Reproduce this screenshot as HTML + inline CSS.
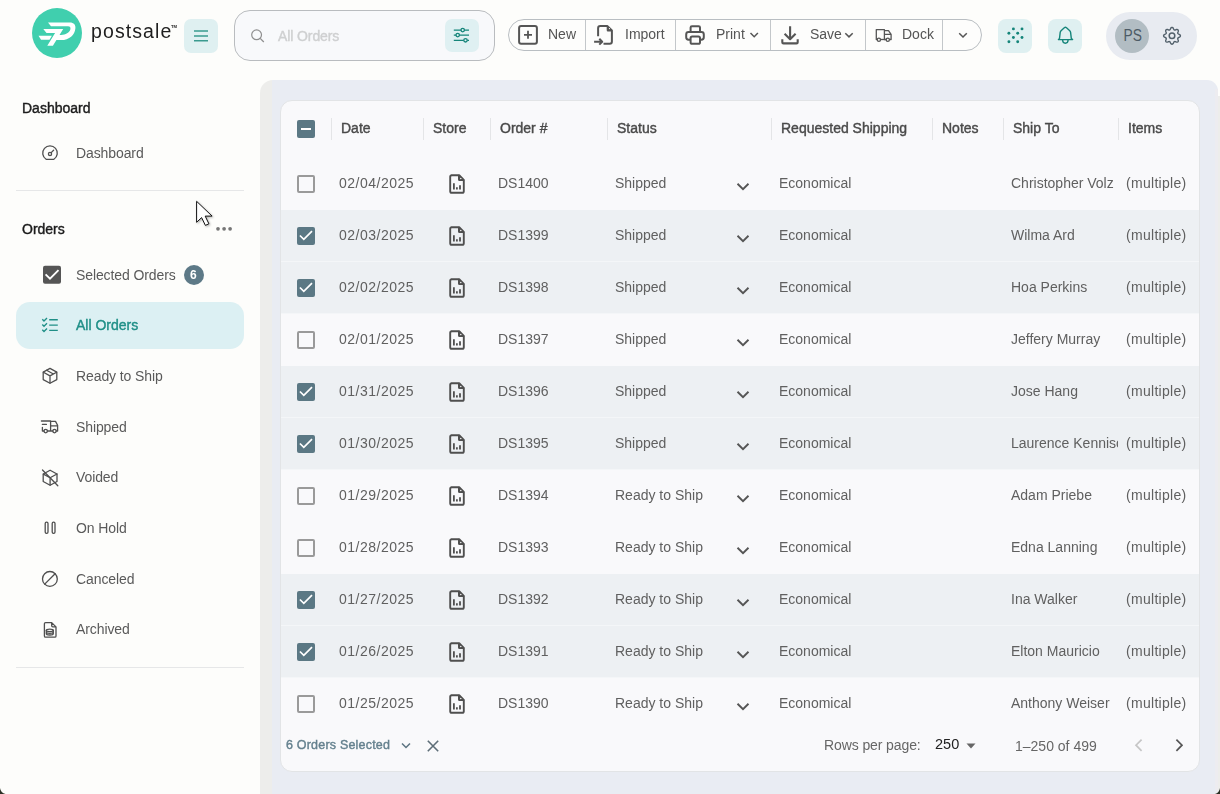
<!DOCTYPE html>
<html><head><meta charset="utf-8">
<style>
*{box-sizing:border-box;margin:0;padding:0}
html,body{width:1220px;height:794px;overflow:hidden;background:#fdfdfb;font-family:"Liberation Sans",sans-serif;color:#555;position:relative}
.a{position:absolute}
svg{display:block}
.t{position:absolute;white-space:nowrap;line-height:1;will-change:transform}
/* header */
.logo{left:32px;top:8px;width:50px;height:50px}
.brand{left:90.5px;top:22px;font-size:19.5px;color:#1e1e1e;letter-spacing:1.1px}
.hamb{left:184px;top:19px;width:34px;height:34px;border-radius:7px;background:#dff0f1}
.search{left:234px;top:10px;width:261px;height:51px;border:1px solid #b9bcbf;border-radius:16px;background:#f8f9fb}
.filt{left:445px;top:19px;width:34px;height:33px;border-radius:7px;background:#dff0f2}
.tb{left:508px;top:19px;width:474px;height:32px;border:1px solid #b9bec2;border-radius:16px;background:#fdfdfc}
.sep{position:absolute;top:0;width:1px;height:30px;background:#c6cacd}
.tbt{position:absolute;top:8px;font-size:14px;color:#555;line-height:1}
.sq{width:34px;height:34px;border-radius:8px;background:#dff0f1}
.user{left:1106px;top:12px;width:91px;height:48px;border-radius:24px;background:#e8ebf1}
.av{left:1115px;top:19px;width:34px;height:34px;border-radius:50%;background:#b2bdc3;color:#4d5b66;font-size:16px;text-align:center;line-height:34px;padding-left:1px}
/* sidebar */
.sh{font-size:14px;color:#1c1c1c;letter-spacing:0;-webkit-text-stroke:0.4px #1c1c1c}
.si{font-size:14px;color:#5a5a5a;letter-spacing:-0.1px}
.div{height:1px;background:#e6e7e8}
/* main */
.panel{left:260px;top:80px;width:958.2px;height:714px;background:linear-gradient(90deg,#ededeb 0,#ededeb 12px,#e9ecf3 12px);border-radius:13px 11px 0 0}
.card{left:280px;top:100px;width:920px;height:672px;background:#f9f9fb;border:1px solid #e2e4e6;border-radius:12px;overflow:hidden}
.row{position:absolute;left:0;width:918px;height:52px}
.sel{background:#edf0f3}
.ht{font-size:14px;color:#4a4a4a;-webkit-text-stroke:0.4px #4a4a4a}
.dt{letter-spacing:0.5px}
.mu{letter-spacing:0.3px}
.ct{font-size:14px;color:#606060}
.row.sel{border-bottom:1px solid #f4f6f8}
.row.last{border-bottom:none}
.cb{width:18px;height:18px;border:2px solid #9a9a9a;border-radius:2px}
.cb.on{border:none;background:#5b7884}
.cbh{width:18px;height:18px;border-radius:2px;background:#5b7884}
.hsep{width:1px;height:22px;background:#e4e5e7}
</style></head>
<body>
<!-- HEADER -->
<svg class="a logo" viewBox="0 0 50 50"><circle cx="25" cy="25" r="25" fill="#40cfae"/>
<path fill="#fff" d="M16 14.4H37.8C41.8 14.4 43.8 16.6 43.4 20.2C42.8 26.8 37.5 32.1 29 32.1H19.6L22.4 26.9H29.2C33.6 26.9 37.6 24.6 38.4 21.2C38.8 19.3 38 18.2 36 18.2H19Z"/>
<path fill="#fff" d="M11.3 21H31.2L20.9 37.7H15.3L23.1 25H14.5Z"/>
<path fill="#fff" d="M6.5 27.8H19.9L17.5 31.85H9Z"/>
</svg>
<div class="t brand">postsale</div>
<div class="t" style="left:170.5px;top:25px;font-size:4.2px;font-weight:bold;color:#222;letter-spacing:0">TM</div>
<div class="a hamb"></div>
<div class="a search"></div>
<div class="t" style="left:278px;top:29px;font-size:14px;letter-spacing:-0.1px;color:#cfd0d1;-webkit-text-stroke:0.4px #cfd0d1">All Orders</div>
<div class="a filt"></div>
<div class="a tb"></div>
<div class="t tbt" style="left:548px;top:27px">New</div>
<div class="t tbt" style="left:625px;top:27px">Import</div>
<div class="t tbt" style="left:715.5px;top:27px">Print</div>
<div class="t tbt" style="left:809.5px;top:27px">Save</div>
<div class="t tbt" style="left:902px;top:27px">Dock</div>
<div class="a sq" style="left:998px;top:19px"></div>
<div class="a sq" style="left:1048px;top:19px"></div>
<div class="a user"></div>
<div class="a av"><span style="display:inline-block;transform:scaleX(0.86)">PS</span></div>
<svg class="a" style="left:0;top:0" width="1220" height="80" viewBox="0 0 1220 80" fill="none">
 <!-- hamburger -->
 <path d="M194 31H208M194 36H208M194 40.8H208" stroke="#3a9a8f" stroke-width="1.6"/>
 <!-- search -->
 <circle cx="256.6" cy="34.8" r="4.9" stroke="#8f8f8f" stroke-width="1.2"/>
 <path d="M260.2 38.4L263.8 42" stroke="#8f8f8f" stroke-width="1.3"/>
 <!-- filter -->
 <g stroke="#15857a" stroke-width="1.3"><path d="M453.8 30.1H469M453.8 35.1H469M453.8 40.3H469"/>
 <circle cx="462.7" cy="30.1" r="1.7" fill="#dff0f2"/><circle cx="457.7" cy="35.1" r="1.7" fill="#dff0f2"/><circle cx="465.5" cy="40.3" r="1.7" fill="#dff0f2"/></g>
 <!-- toolbar separators -->
 <g stroke="#c3c7ca" stroke-width="1"><path d="M585.5 20V50M675.5 20V50M770.5 20V50M865.5 20V50M942.5 20V50"/></g>
 <g stroke="#555" stroke-width="2" stroke-linejoin="round" stroke-linecap="round">
 <!-- new -->
 <rect x="519.1" y="26.1" width="17.8" height="17.6" rx="2"/>
 </g>
 <path d="M524 34.8H532M528 30.8V38.8" stroke="#555" stroke-width="1.8"/>
 <!-- import -->
 <g stroke="#555" stroke-width="2" stroke-linejoin="round">
 <path d="M598.1 36.2V28.3Q598.1 26.1 600.3 26.1H607.5L611.9 30.5V41.5Q611.9 43.7 609.7 43.7H603.5"/>
 <path d="M594.1 41.7H602.2M599.3 38.8L602.2 41.7L599.3 44.6"/>
 <path d="M607.3 26.6V30.3Q607.3 30.9 607.9 30.9H611.5Z" fill="#555" stroke-width="1.2"/>
 </g>
 <circle cx="609.5" cy="28.6" r="0.6" fill="#fff"/>
 <!-- print -->
 <g stroke="#555" stroke-width="2" stroke-linejoin="round">
 <path d="M690.6 31.5V27.6Q690.6 26.2 692 26.2H698.6Q700 26.2 700 27.6V31.5"/>
 <path d="M690 39.7H688.6Q686.2 39.7 686.2 37.3V34.4Q686.2 32 688.6 32H701.4Q703.8 32 703.8 34.4V37.3Q703.8 39.7 701.4 39.7H700.6"/>
 <rect x="690.6" y="36.5" width="9.4" height="7.3" rx="1.6"/>
 </g>
 <path d="M750.5 33L754.2 36.7L757.9 33" stroke="#555" stroke-width="1.5"/>
 <!-- save -->
 <g stroke="#555" stroke-width="2.1" stroke-linejoin="round">
 <path d="M790.1 26.2V39.2M784.6 33.8L790.1 39.2L795.6 33.8"/>
 <path d="M782.3 39.3V42.2Q782.3 43.4 783.5 43.4H796.5Q797.7 43.4 797.7 42.2V39.3"/>
 </g>
 <path d="M845.3 33.2L849 36.9L852.7 33.2" stroke="#555" stroke-width="1.5"/>
 <!-- dock truck -->
 <g stroke="#555" stroke-width="1.3" stroke-linejoin="round">
 <path d="M877.3 39.5H876.3V29.6H884.4V39.5H886"/>
 <path d="M884.4 30.6H888.5L891.1 34.4V39.5H889.5M884.4 34.3H891.1"/>
 <circle cx="878.9" cy="39.7" r="1.6"/><circle cx="887.8" cy="39.7" r="1.6"/>
 <path d="M880.5 39.5H886.2"/>
 </g>
 <path d="M959.2 33.2L963 37L966.8 33.2" stroke="#555" stroke-width="1.5"/>
 <!-- grid dots -->
 <g fill="#15857a"><circle cx="1013.4" cy="28.9" r="1.45"/><circle cx="1022" cy="28.9" r="1.45"/><circle cx="1008.9" cy="33.2" r="1.45"/><circle cx="1017.7" cy="33.2" r="1.45"/><circle cx="1013.4" cy="37.5" r="1.45"/><circle cx="1022" cy="37.5" r="1.45"/><circle cx="1008.9" cy="41.8" r="1.45"/><circle cx="1017.7" cy="41.8" r="1.45"/></g>
 <!-- bell -->
 <g stroke="#15857a" stroke-width="1.4" stroke-linejoin="round">
 <path d="M1058.4 39.6H1072.6L1071.3 38.4L1070.6 32.4Q1070.4 31.2 1069.5 30.4L1066.5 27.7Q1065.4 26.9 1064.3 27.7L1061.3 30.4Q1060.4 31.2 1060.2 32.4L1059.5 38.4Z"/>
 <path d="M1062.6 40Q1062.8 43.2 1065.35 43.2Q1067.9 43.2 1068.1 40"/>
 </g>
 <!-- gear -->
 <path d="M1180.40 35.80 L1180.35 36.13 L1180.21 36.45 L1179.98 36.74 L1179.66 37.01 L1179.21 37.23 L1178.75 37.42 L1178.41 37.61 L1178.15 37.80 L1177.95 37.99 L1177.82 38.21 L1177.76 38.45 L1177.76 38.73 L1177.81 39.06 L1177.92 39.43 L1178.11 39.88 L1178.28 40.36 L1178.31 40.78 L1178.26 41.15 L1178.14 41.47 L1177.94 41.74 L1177.67 41.94 L1177.35 42.06 L1176.98 42.11 L1176.56 42.08 L1176.08 41.91 L1175.63 41.72 L1175.26 41.61 L1174.93 41.56 L1174.65 41.56 L1174.41 41.62 L1174.19 41.75 L1174.00 41.95 L1173.81 42.21 L1173.62 42.55 L1173.43 43.01 L1173.21 43.46 L1172.94 43.78 L1172.65 44.01 L1172.33 44.15 L1172.00 44.20 L1171.67 44.15 L1171.35 44.01 L1171.06 43.78 L1170.79 43.46 L1170.57 43.01 L1170.38 42.55 L1170.19 42.21 L1170.00 41.95 L1169.81 41.75 L1169.59 41.62 L1169.35 41.56 L1169.07 41.56 L1168.74 41.61 L1168.37 41.72 L1167.92 41.91 L1167.44 42.08 L1167.02 42.11 L1166.65 42.06 L1166.33 41.94 L1166.06 41.74 L1165.86 41.47 L1165.74 41.15 L1165.69 40.78 L1165.72 40.36 L1165.89 39.88 L1166.08 39.43 L1166.19 39.06 L1166.24 38.73 L1166.24 38.45 L1166.18 38.21 L1166.05 37.99 L1165.85 37.80 L1165.59 37.61 L1165.25 37.42 L1164.79 37.23 L1164.34 37.01 L1164.02 36.74 L1163.79 36.45 L1163.65 36.13 L1163.60 35.80 L1163.65 35.47 L1163.79 35.15 L1164.02 34.86 L1164.34 34.59 L1164.79 34.37 L1165.25 34.18 L1165.59 33.99 L1165.85 33.80 L1166.05 33.61 L1166.18 33.39 L1166.24 33.15 L1166.24 32.87 L1166.19 32.54 L1166.08 32.17 L1165.89 31.72 L1165.72 31.24 L1165.69 30.82 L1165.74 30.45 L1165.86 30.13 L1166.06 29.86 L1166.33 29.66 L1166.65 29.54 L1167.02 29.49 L1167.44 29.52 L1167.92 29.69 L1168.37 29.88 L1168.74 29.99 L1169.07 30.04 L1169.35 30.04 L1169.59 29.98 L1169.81 29.85 L1170.00 29.65 L1170.19 29.39 L1170.38 29.05 L1170.57 28.59 L1170.79 28.14 L1171.06 27.82 L1171.35 27.59 L1171.67 27.45 L1172.00 27.40 L1172.33 27.45 L1172.65 27.59 L1172.94 27.82 L1173.21 28.14 L1173.43 28.59 L1173.62 29.05 L1173.81 29.39 L1174.00 29.65 L1174.19 29.85 L1174.41 29.98 L1174.65 30.04 L1174.93 30.04 L1175.26 29.99 L1175.63 29.88 L1176.08 29.69 L1176.56 29.52 L1176.98 29.49 L1177.35 29.54 L1177.67 29.66 L1177.94 29.86 L1178.14 30.13 L1178.26 30.45 L1178.31 30.82 L1178.28 31.24 L1178.11 31.72 L1177.92 32.17 L1177.81 32.54 L1177.76 32.87 L1177.76 33.15 L1177.82 33.39 L1177.95 33.61 L1178.15 33.80 L1178.41 33.99 L1178.75 34.18 L1179.21 34.37 L1179.66 34.59 L1179.98 34.86 L1180.21 35.15 L1180.35 35.47Z" stroke="#52606b" stroke-width="1.4" stroke-linejoin="round"/>
 <circle cx="1172" cy="35.8" r="2.8" stroke="#52606b" stroke-width="1.5"/>
</svg>

<!-- SIDEBAR -->
<div class="t sh" style="left:22px;top:101px">Dashboard</div>
<div class="t si" style="left:76px;top:146px">Dashboard</div>
<div class="a div" style="left:16px;top:190px;width:228px"></div>
<div class="t sh" style="left:22px;top:222px">Orders</div>
<div class="t si" style="left:76px;top:268px">Selected Orders</div>
<div class="a" style="left:16px;top:302px;width:228px;height:47px;border-radius:14px;background:#dcf0f3"></div>
<div class="t si" style="left:76px;top:318px;color:#1f8f87;letter-spacing:0;-webkit-text-stroke:0.4px #1f8f87">All Orders</div>
<div class="t si" style="left:76px;top:369px">Ready to Ship</div>
<div class="t si" style="left:76px;top:420px">Shipped</div>
<div class="t si" style="left:76px;top:470px">Voided</div>
<div class="t si" style="left:76px;top:521px">On Hold</div>
<div class="t si" style="left:76px;top:572px">Canceled</div>
<div class="t si" style="left:76px;top:622px">Archived</div>
<div class="a div" style="left:16px;top:667px;width:228px"></div>

<svg class="a" style="left:0;top:80px" width="260" height="600" viewBox="0 80 260 600" fill="none">
 <g stroke="#4f4f4f" stroke-width="1.3" stroke-linejoin="round" stroke-linecap="round">
 <!-- dashboard gauge -->
 <path d="M46.1 159.3A7.3 7.3 0 1 1 53.9 159.3Z"/>
 <circle cx="50" cy="153.9" r="1.6"/>
 <path d="M51.2 152.6L53.6 150.3"/>
 <!-- box -->
 <path d="M50 368.4L56.8 372.1V379.6L50 383.3L43.2 379.6V372.1Z"/>
 <path d="M43.4 372.2L50 375.9L56.6 372.2M50 375.9V383.1M46.6 370.3L53.4 374"/>
 <!-- truck -->
 <path d="M41.4 421H50.6V431M50.6 421.4H55.5L57.6 425.2V431H56.3M50.6 425.8H57.6M42.4 424.4H46.4M42.4 427.3V431H44M47.4 431H52.8"/>
 <circle cx="45.7" cy="431.1" r="1.7"/><circle cx="54.5" cy="431.1" r="1.7"/>
 <!-- voided -->
 <path d="M50.1 470.2L57 474V481.5L50.1 485.3L43.2 481.5V474Z"/>
 <path d="M43.4 474.1L50.1 477.8L57 474M50.1 477.8V485"/>
 <path d="M42.5 470L57.8 485.8"/>
 <!-- on hold -->
 <rect x="45.2" y="522.1" width="2.8" height="11.3" rx="1.3"/>
 <rect x="52.2" y="522.1" width="2.8" height="11.3" rx="1.3"/>
 <!-- canceled -->
 <circle cx="49.9" cy="578.9" r="7.4"/>
 <path d="M55.1 573.7L44.7 584.1"/>
 <!-- archived -->
 <path d="M51.7 622.6H45.6Q44.4 622.6 44.4 623.8V636Q44.4 637.2 45.6 637.2H54.8Q56 637.2 56 636V626.9ZM51.7 622.6V625.8Q51.7 626.9 52.8 626.9H56"/>
 <ellipse cx="49.8" cy="630.3" rx="3.5" ry="1.25"/>
 <path d="M46.3 630.3V633.7Q46.3 635 49.8 635Q53.3 635 53.3 633.7V630.3M46.3 632Q46.3 633.3 49.8 633.3Q53.3 633.3 53.3 632"/>
 </g>
 <!-- selected orders checkbox -->
 <rect x="43" y="265.8" width="18" height="18" rx="2" fill="#555"/>
 <path d="M45.6 274.4L50 278.7L58.5 270.2" stroke="#fff" stroke-width="1.9"/>
 <!-- badge -->
 <circle cx="194" cy="275" r="10" fill="#5d7987"/>
 <!-- all orders icon -->
 <g stroke="#1f8f87" stroke-width="1.4">
 <path d="M42.3 319.2L44 320.9L47 317.9M42.3 324.5L44 326.2L47 323.2M42.3 329.8L44 331.5L47 328.5"/>
 <path d="M49.2 319.8H57.8M49.2 325.1H57.8M49.2 330.4H57.8"/>
 </g>
 <!-- dots -->
 <g fill="#767676"><circle cx="218" cy="228.8" r="1.85"/><circle cx="224.1" cy="228.8" r="1.85"/><circle cx="230.1" cy="228.8" r="1.85"/></g>
</svg>
<div class="t" style="left:190px;top:269px;font-size:12px;font-weight:bold;color:#fff">6</div>
<!-- cursor -->
<svg class="a" style="left:190.6px;top:196px;filter:drop-shadow(1.5px 1.5px 1px rgba(0,0,0,.3))" width="30" height="34" viewBox="0 0 30 34"><path d="M5.6 5.3V26.3L10.6 21.6L14.4 29.4L17.9 27.8L14.2 20.1H21.1Z" fill="#fff" stroke="#111" stroke-width="1" stroke-linejoin="miter"/></svg>
<!-- MAIN -->
<div class="a" style="left:1218px;top:96px;width:2px;height:698px;background:#ededeb"></div>
<div class="a panel"></div>
<div class="a" style="left:1214.5px;top:89px;width:3.5px;height:705px;background:#edecf0"></div>
<div class="a card" id="card">
<div class="t ht" style="left:60px;top:20.299999999999997px">Date</div><div class="t ht" style="left:152px;top:20.299999999999997px">Store</div><div class="t ht" style="left:219px;top:20.299999999999997px">Order #</div><div class="t ht" style="left:336px;top:20.299999999999997px">Status</div><div class="t ht" style="left:500px;top:20.299999999999997px">Requested Shipping</div><div class="t ht" style="left:661px;top:20.299999999999997px">Notes</div><div class="t ht" style="left:731.5px;top:20.299999999999997px">Ship To</div><div class="t ht" style="left:847px;top:20.299999999999997px">Items</div><div class="a hsep" style="left:50px;top:17px"></div><div class="a hsep" style="left:142px;top:17px"></div><div class="a hsep" style="left:209px;top:17px"></div><div class="a hsep" style="left:326px;top:17px"></div><div class="a hsep" style="left:490px;top:17px"></div><div class="a hsep" style="left:651px;top:17px"></div><div class="a hsep" style="left:722px;top:17px"></div><div class="a hsep" style="left:837px;top:17px"></div><div class="a cbh" style="left:16px;top:19px"><div style="position:absolute;left:4px;top:7.5px;width:10px;height:2.6px;background:#fff"></div></div><div class="row" style="top:57px"><div class="a" style="left:16px;top:17px"><div class="cb"></div></div><div class="t ct dt"  style="left:58px;top:18px">02/04/2025</div><div class="a" style="left:167px;top:16px"><svg width="18" height="20" viewBox="0 0 18 20"><path d="M3.2 1.2H11.2L15.8 5.8V17.2Q15.8 18.8 14.2 18.8H3.8Q2.2 18.8 2.2 17.2V2.8Q2.2 1.2 3.8 1.2Z" fill="none" stroke="#4f4f4f" stroke-width="1.9" stroke-linejoin="round"/><path d="M10.6 1.4V5.4Q10.6 6.4 11.6 6.4H15.6Z" fill="#4f4f4f" stroke="#4f4f4f" stroke-width="1.2" stroke-linejoin="round"/><circle cx="12.8" cy="4.5" r="0.7" fill="#fff"/><path d="M5.9 15.6V9.2M8.9 15.6V13.3M12 15.6V11.2" stroke="#4f4f4f" stroke-width="1.8"/></svg></div><div class="t ct" style="left:217px;top:18px">DS1400</div><div class="t ct" style="left:334px;top:18px">Shipped</div><div class="a" style="left:455px;top:24px"><svg width="14" height="9" viewBox="0 0 14 9"><path d="M1.5 1.8L7 7.2L12.5 1.8" fill="none" stroke="#555" stroke-width="1.9"/></svg></div><div class="t ct" style="left:498px;top:18px">Economical</div><div class="t ct" style="left:730px;top:18px;width:106.5px;padding-bottom:5px;overflow:hidden">Christopher Volz</div><div class="t ct mu" style="left:845px;top:18px">(multiple)</div></div><div class="row sel" style="top:109px"><div class="a" style="left:16px;top:17px"><div class="cb on"><svg width="18" height="18" viewBox="0 0 18 18"><path d="M2.9 8.5L6.8 12.4L15 4.2" fill="none" stroke="#fff" stroke-width="1.7"/></svg></div></div><div class="t ct dt"  style="left:58px;top:18px">02/03/2025</div><div class="a" style="left:167px;top:16px"><svg width="18" height="20" viewBox="0 0 18 20"><path d="M3.2 1.2H11.2L15.8 5.8V17.2Q15.8 18.8 14.2 18.8H3.8Q2.2 18.8 2.2 17.2V2.8Q2.2 1.2 3.8 1.2Z" fill="none" stroke="#4f4f4f" stroke-width="1.9" stroke-linejoin="round"/><path d="M10.6 1.4V5.4Q10.6 6.4 11.6 6.4H15.6Z" fill="#4f4f4f" stroke="#4f4f4f" stroke-width="1.2" stroke-linejoin="round"/><circle cx="12.8" cy="4.5" r="0.7" fill="#fff"/><path d="M5.9 15.6V9.2M8.9 15.6V13.3M12 15.6V11.2" stroke="#4f4f4f" stroke-width="1.8"/></svg></div><div class="t ct" style="left:217px;top:18px">DS1399</div><div class="t ct" style="left:334px;top:18px">Shipped</div><div class="a" style="left:455px;top:24px"><svg width="14" height="9" viewBox="0 0 14 9"><path d="M1.5 1.8L7 7.2L12.5 1.8" fill="none" stroke="#555" stroke-width="1.9"/></svg></div><div class="t ct" style="left:498px;top:18px">Economical</div><div class="t ct" style="left:730px;top:18px;width:106.5px;padding-bottom:5px;overflow:hidden">Wilma Ard</div><div class="t ct mu" style="left:845px;top:18px">(multiple)</div></div><div class="row sel" style="top:161px"><div class="a" style="left:16px;top:17px"><div class="cb on"><svg width="18" height="18" viewBox="0 0 18 18"><path d="M2.9 8.5L6.8 12.4L15 4.2" fill="none" stroke="#fff" stroke-width="1.7"/></svg></div></div><div class="t ct dt"  style="left:58px;top:18px">02/02/2025</div><div class="a" style="left:167px;top:16px"><svg width="18" height="20" viewBox="0 0 18 20"><path d="M3.2 1.2H11.2L15.8 5.8V17.2Q15.8 18.8 14.2 18.8H3.8Q2.2 18.8 2.2 17.2V2.8Q2.2 1.2 3.8 1.2Z" fill="none" stroke="#4f4f4f" stroke-width="1.9" stroke-linejoin="round"/><path d="M10.6 1.4V5.4Q10.6 6.4 11.6 6.4H15.6Z" fill="#4f4f4f" stroke="#4f4f4f" stroke-width="1.2" stroke-linejoin="round"/><circle cx="12.8" cy="4.5" r="0.7" fill="#fff"/><path d="M5.9 15.6V9.2M8.9 15.6V13.3M12 15.6V11.2" stroke="#4f4f4f" stroke-width="1.8"/></svg></div><div class="t ct" style="left:217px;top:18px">DS1398</div><div class="t ct" style="left:334px;top:18px">Shipped</div><div class="a" style="left:455px;top:24px"><svg width="14" height="9" viewBox="0 0 14 9"><path d="M1.5 1.8L7 7.2L12.5 1.8" fill="none" stroke="#555" stroke-width="1.9"/></svg></div><div class="t ct" style="left:498px;top:18px">Economical</div><div class="t ct" style="left:730px;top:18px;width:106.5px;padding-bottom:5px;overflow:hidden">Hoa Perkins</div><div class="t ct mu" style="left:845px;top:18px">(multiple)</div></div><div class="row" style="top:213px"><div class="a" style="left:16px;top:17px"><div class="cb"></div></div><div class="t ct dt"  style="left:58px;top:18px">02/01/2025</div><div class="a" style="left:167px;top:16px"><svg width="18" height="20" viewBox="0 0 18 20"><path d="M3.2 1.2H11.2L15.8 5.8V17.2Q15.8 18.8 14.2 18.8H3.8Q2.2 18.8 2.2 17.2V2.8Q2.2 1.2 3.8 1.2Z" fill="none" stroke="#4f4f4f" stroke-width="1.9" stroke-linejoin="round"/><path d="M10.6 1.4V5.4Q10.6 6.4 11.6 6.4H15.6Z" fill="#4f4f4f" stroke="#4f4f4f" stroke-width="1.2" stroke-linejoin="round"/><circle cx="12.8" cy="4.5" r="0.7" fill="#fff"/><path d="M5.9 15.6V9.2M8.9 15.6V13.3M12 15.6V11.2" stroke="#4f4f4f" stroke-width="1.8"/></svg></div><div class="t ct" style="left:217px;top:18px">DS1397</div><div class="t ct" style="left:334px;top:18px">Shipped</div><div class="a" style="left:455px;top:24px"><svg width="14" height="9" viewBox="0 0 14 9"><path d="M1.5 1.8L7 7.2L12.5 1.8" fill="none" stroke="#555" stroke-width="1.9"/></svg></div><div class="t ct" style="left:498px;top:18px">Economical</div><div class="t ct" style="left:730px;top:18px;width:106.5px;padding-bottom:5px;overflow:hidden">Jeffery Murray</div><div class="t ct mu" style="left:845px;top:18px">(multiple)</div></div><div class="row sel" style="top:265px"><div class="a" style="left:16px;top:17px"><div class="cb on"><svg width="18" height="18" viewBox="0 0 18 18"><path d="M2.9 8.5L6.8 12.4L15 4.2" fill="none" stroke="#fff" stroke-width="1.7"/></svg></div></div><div class="t ct dt"  style="left:58px;top:18px">01/31/2025</div><div class="a" style="left:167px;top:16px"><svg width="18" height="20" viewBox="0 0 18 20"><path d="M3.2 1.2H11.2L15.8 5.8V17.2Q15.8 18.8 14.2 18.8H3.8Q2.2 18.8 2.2 17.2V2.8Q2.2 1.2 3.8 1.2Z" fill="none" stroke="#4f4f4f" stroke-width="1.9" stroke-linejoin="round"/><path d="M10.6 1.4V5.4Q10.6 6.4 11.6 6.4H15.6Z" fill="#4f4f4f" stroke="#4f4f4f" stroke-width="1.2" stroke-linejoin="round"/><circle cx="12.8" cy="4.5" r="0.7" fill="#fff"/><path d="M5.9 15.6V9.2M8.9 15.6V13.3M12 15.6V11.2" stroke="#4f4f4f" stroke-width="1.8"/></svg></div><div class="t ct" style="left:217px;top:18px">DS1396</div><div class="t ct" style="left:334px;top:18px">Shipped</div><div class="a" style="left:455px;top:24px"><svg width="14" height="9" viewBox="0 0 14 9"><path d="M1.5 1.8L7 7.2L12.5 1.8" fill="none" stroke="#555" stroke-width="1.9"/></svg></div><div class="t ct" style="left:498px;top:18px">Economical</div><div class="t ct" style="left:730px;top:18px;width:106.5px;padding-bottom:5px;overflow:hidden">Jose Hang</div><div class="t ct mu" style="left:845px;top:18px">(multiple)</div></div><div class="row sel" style="top:317px"><div class="a" style="left:16px;top:17px"><div class="cb on"><svg width="18" height="18" viewBox="0 0 18 18"><path d="M2.9 8.5L6.8 12.4L15 4.2" fill="none" stroke="#fff" stroke-width="1.7"/></svg></div></div><div class="t ct dt"  style="left:58px;top:18px">01/30/2025</div><div class="a" style="left:167px;top:16px"><svg width="18" height="20" viewBox="0 0 18 20"><path d="M3.2 1.2H11.2L15.8 5.8V17.2Q15.8 18.8 14.2 18.8H3.8Q2.2 18.8 2.2 17.2V2.8Q2.2 1.2 3.8 1.2Z" fill="none" stroke="#4f4f4f" stroke-width="1.9" stroke-linejoin="round"/><path d="M10.6 1.4V5.4Q10.6 6.4 11.6 6.4H15.6Z" fill="#4f4f4f" stroke="#4f4f4f" stroke-width="1.2" stroke-linejoin="round"/><circle cx="12.8" cy="4.5" r="0.7" fill="#fff"/><path d="M5.9 15.6V9.2M8.9 15.6V13.3M12 15.6V11.2" stroke="#4f4f4f" stroke-width="1.8"/></svg></div><div class="t ct" style="left:217px;top:18px">DS1395</div><div class="t ct" style="left:334px;top:18px">Shipped</div><div class="a" style="left:455px;top:24px"><svg width="14" height="9" viewBox="0 0 14 9"><path d="M1.5 1.8L7 7.2L12.5 1.8" fill="none" stroke="#555" stroke-width="1.9"/></svg></div><div class="t ct" style="left:498px;top:18px">Economical</div><div class="t ct" style="left:730px;top:18px;width:106.5px;padding-bottom:5px;overflow:hidden">Laurence Kennison</div><div class="t ct mu" style="left:845px;top:18px">(multiple)</div></div><div class="row" style="top:369px"><div class="a" style="left:16px;top:17px"><div class="cb"></div></div><div class="t ct dt"  style="left:58px;top:18px">01/29/2025</div><div class="a" style="left:167px;top:16px"><svg width="18" height="20" viewBox="0 0 18 20"><path d="M3.2 1.2H11.2L15.8 5.8V17.2Q15.8 18.8 14.2 18.8H3.8Q2.2 18.8 2.2 17.2V2.8Q2.2 1.2 3.8 1.2Z" fill="none" stroke="#4f4f4f" stroke-width="1.9" stroke-linejoin="round"/><path d="M10.6 1.4V5.4Q10.6 6.4 11.6 6.4H15.6Z" fill="#4f4f4f" stroke="#4f4f4f" stroke-width="1.2" stroke-linejoin="round"/><circle cx="12.8" cy="4.5" r="0.7" fill="#fff"/><path d="M5.9 15.6V9.2M8.9 15.6V13.3M12 15.6V11.2" stroke="#4f4f4f" stroke-width="1.8"/></svg></div><div class="t ct" style="left:217px;top:18px">DS1394</div><div class="t ct" style="left:334px;top:18px">Ready to Ship</div><div class="a" style="left:455px;top:24px"><svg width="14" height="9" viewBox="0 0 14 9"><path d="M1.5 1.8L7 7.2L12.5 1.8" fill="none" stroke="#555" stroke-width="1.9"/></svg></div><div class="t ct" style="left:498px;top:18px">Economical</div><div class="t ct" style="left:730px;top:18px;width:106.5px;padding-bottom:5px;overflow:hidden">Adam Priebe</div><div class="t ct mu" style="left:845px;top:18px">(multiple)</div></div><div class="row" style="top:421px"><div class="a" style="left:16px;top:17px"><div class="cb"></div></div><div class="t ct dt"  style="left:58px;top:18px">01/28/2025</div><div class="a" style="left:167px;top:16px"><svg width="18" height="20" viewBox="0 0 18 20"><path d="M3.2 1.2H11.2L15.8 5.8V17.2Q15.8 18.8 14.2 18.8H3.8Q2.2 18.8 2.2 17.2V2.8Q2.2 1.2 3.8 1.2Z" fill="none" stroke="#4f4f4f" stroke-width="1.9" stroke-linejoin="round"/><path d="M10.6 1.4V5.4Q10.6 6.4 11.6 6.4H15.6Z" fill="#4f4f4f" stroke="#4f4f4f" stroke-width="1.2" stroke-linejoin="round"/><circle cx="12.8" cy="4.5" r="0.7" fill="#fff"/><path d="M5.9 15.6V9.2M8.9 15.6V13.3M12 15.6V11.2" stroke="#4f4f4f" stroke-width="1.8"/></svg></div><div class="t ct" style="left:217px;top:18px">DS1393</div><div class="t ct" style="left:334px;top:18px">Ready to Ship</div><div class="a" style="left:455px;top:24px"><svg width="14" height="9" viewBox="0 0 14 9"><path d="M1.5 1.8L7 7.2L12.5 1.8" fill="none" stroke="#555" stroke-width="1.9"/></svg></div><div class="t ct" style="left:498px;top:18px">Economical</div><div class="t ct" style="left:730px;top:18px;width:106.5px;padding-bottom:5px;overflow:hidden">Edna Lanning</div><div class="t ct mu" style="left:845px;top:18px">(multiple)</div></div><div class="row sel" style="top:473px"><div class="a" style="left:16px;top:17px"><div class="cb on"><svg width="18" height="18" viewBox="0 0 18 18"><path d="M2.9 8.5L6.8 12.4L15 4.2" fill="none" stroke="#fff" stroke-width="1.7"/></svg></div></div><div class="t ct dt"  style="left:58px;top:18px">01/27/2025</div><div class="a" style="left:167px;top:16px"><svg width="18" height="20" viewBox="0 0 18 20"><path d="M3.2 1.2H11.2L15.8 5.8V17.2Q15.8 18.8 14.2 18.8H3.8Q2.2 18.8 2.2 17.2V2.8Q2.2 1.2 3.8 1.2Z" fill="none" stroke="#4f4f4f" stroke-width="1.9" stroke-linejoin="round"/><path d="M10.6 1.4V5.4Q10.6 6.4 11.6 6.4H15.6Z" fill="#4f4f4f" stroke="#4f4f4f" stroke-width="1.2" stroke-linejoin="round"/><circle cx="12.8" cy="4.5" r="0.7" fill="#fff"/><path d="M5.9 15.6V9.2M8.9 15.6V13.3M12 15.6V11.2" stroke="#4f4f4f" stroke-width="1.8"/></svg></div><div class="t ct" style="left:217px;top:18px">DS1392</div><div class="t ct" style="left:334px;top:18px">Ready to Ship</div><div class="a" style="left:455px;top:24px"><svg width="14" height="9" viewBox="0 0 14 9"><path d="M1.5 1.8L7 7.2L12.5 1.8" fill="none" stroke="#555" stroke-width="1.9"/></svg></div><div class="t ct" style="left:498px;top:18px">Economical</div><div class="t ct" style="left:730px;top:18px;width:106.5px;padding-bottom:5px;overflow:hidden">Ina Walker</div><div class="t ct mu" style="left:845px;top:18px">(multiple)</div></div><div class="row sel" style="top:525px"><div class="a" style="left:16px;top:17px"><div class="cb on"><svg width="18" height="18" viewBox="0 0 18 18"><path d="M2.9 8.5L6.8 12.4L15 4.2" fill="none" stroke="#fff" stroke-width="1.7"/></svg></div></div><div class="t ct dt"  style="left:58px;top:18px">01/26/2025</div><div class="a" style="left:167px;top:16px"><svg width="18" height="20" viewBox="0 0 18 20"><path d="M3.2 1.2H11.2L15.8 5.8V17.2Q15.8 18.8 14.2 18.8H3.8Q2.2 18.8 2.2 17.2V2.8Q2.2 1.2 3.8 1.2Z" fill="none" stroke="#4f4f4f" stroke-width="1.9" stroke-linejoin="round"/><path d="M10.6 1.4V5.4Q10.6 6.4 11.6 6.4H15.6Z" fill="#4f4f4f" stroke="#4f4f4f" stroke-width="1.2" stroke-linejoin="round"/><circle cx="12.8" cy="4.5" r="0.7" fill="#fff"/><path d="M5.9 15.6V9.2M8.9 15.6V13.3M12 15.6V11.2" stroke="#4f4f4f" stroke-width="1.8"/></svg></div><div class="t ct" style="left:217px;top:18px">DS1391</div><div class="t ct" style="left:334px;top:18px">Ready to Ship</div><div class="a" style="left:455px;top:24px"><svg width="14" height="9" viewBox="0 0 14 9"><path d="M1.5 1.8L7 7.2L12.5 1.8" fill="none" stroke="#555" stroke-width="1.9"/></svg></div><div class="t ct" style="left:498px;top:18px">Economical</div><div class="t ct" style="left:730px;top:18px;width:106.5px;padding-bottom:5px;overflow:hidden">Elton Mauricio</div><div class="t ct mu" style="left:845px;top:18px">(multiple)</div></div><div class="row last" style="top:577px"><div class="a" style="left:16px;top:17px"><div class="cb"></div></div><div class="t ct dt"  style="left:58px;top:18px">01/25/2025</div><div class="a" style="left:167px;top:16px"><svg width="18" height="20" viewBox="0 0 18 20"><path d="M3.2 1.2H11.2L15.8 5.8V17.2Q15.8 18.8 14.2 18.8H3.8Q2.2 18.8 2.2 17.2V2.8Q2.2 1.2 3.8 1.2Z" fill="none" stroke="#4f4f4f" stroke-width="1.9" stroke-linejoin="round"/><path d="M10.6 1.4V5.4Q10.6 6.4 11.6 6.4H15.6Z" fill="#4f4f4f" stroke="#4f4f4f" stroke-width="1.2" stroke-linejoin="round"/><circle cx="12.8" cy="4.5" r="0.7" fill="#fff"/><path d="M5.9 15.6V9.2M8.9 15.6V13.3M12 15.6V11.2" stroke="#4f4f4f" stroke-width="1.8"/></svg></div><div class="t ct" style="left:217px;top:18px">DS1390</div><div class="t ct" style="left:334px;top:18px">Ready to Ship</div><div class="a" style="left:455px;top:24px"><svg width="14" height="9" viewBox="0 0 14 9"><path d="M1.5 1.8L7 7.2L12.5 1.8" fill="none" stroke="#555" stroke-width="1.9"/></svg></div><div class="t ct" style="left:498px;top:18px">Economical</div><div class="t ct" style="left:730px;top:18px;width:106.5px;padding-bottom:5px;overflow:hidden">Anthony Weiser</div><div class="t ct mu" style="left:845px;top:18px">(multiple)</div></div><div class="t" style="left:5px;top:638px;font-size:12.5px;color:#64808e;letter-spacing:0.2px;-webkit-text-stroke:0.4px #64808e">6 Orders Selected</div><svg class="a" style="left:119px;top:640px" width="12" height="9" viewBox="0 0 12 9"><path d="M2 2.5L6 6.5L10 2.5" fill="none" stroke="#5b7381" stroke-width="1.5"/></svg><svg class="a" style="left:144px;top:637px" width="16" height="16" viewBox="0 0 16 16"><path d="M2.8 2.8L13.2 13.2M13.2 2.8L2.8 13.2" stroke="#5e6e78" stroke-width="1.6"/></svg><div class="t" style="left:543px;top:637px;font-size:14px;color:#666;letter-spacing:-0.1px">Rows per page:</div><div class="t" style="left:654px;top:636px;font-size:14.5px;color:#222">250</div><svg class="a" style="left:684px;top:641px" width="12" height="8" viewBox="0 0 12 8"><path d="M1.5 1.5H10.5L6 6.5Z" fill="#666"/></svg><div class="t" style="left:734px;top:638px;font-size:14px;color:#666">1–250 of 499</div><svg class="a" style="left:851px;top:637px" width="12" height="14" viewBox="0 0 12 14"><path d="M9.6 1.6L4 7.2L9.6 12.8" fill="none" stroke="#c6c6c6" stroke-width="1.7"/></svg><svg class="a" style="left:892px;top:637px" width="12" height="14" viewBox="0 0 12 14"><path d="M3.4 1.6L9 7.2L3.4 12.8" fill="none" stroke="#555" stroke-width="1.7"/></svg>
</div>
<svg class="a" style="left:1208px;top:782px" width="12" height="12" viewBox="0 0 12 12"><path d="M12 6Q11.2 11 7 12H12Z" fill="#2b3125"/></svg>
<svg class="a" style="left:0;top:782px" width="12" height="12" viewBox="0 0 12 12"><path d="M0 6Q0.8 11 5.5 12H0Z" fill="#2b3125"/></svg>
</body></html>
